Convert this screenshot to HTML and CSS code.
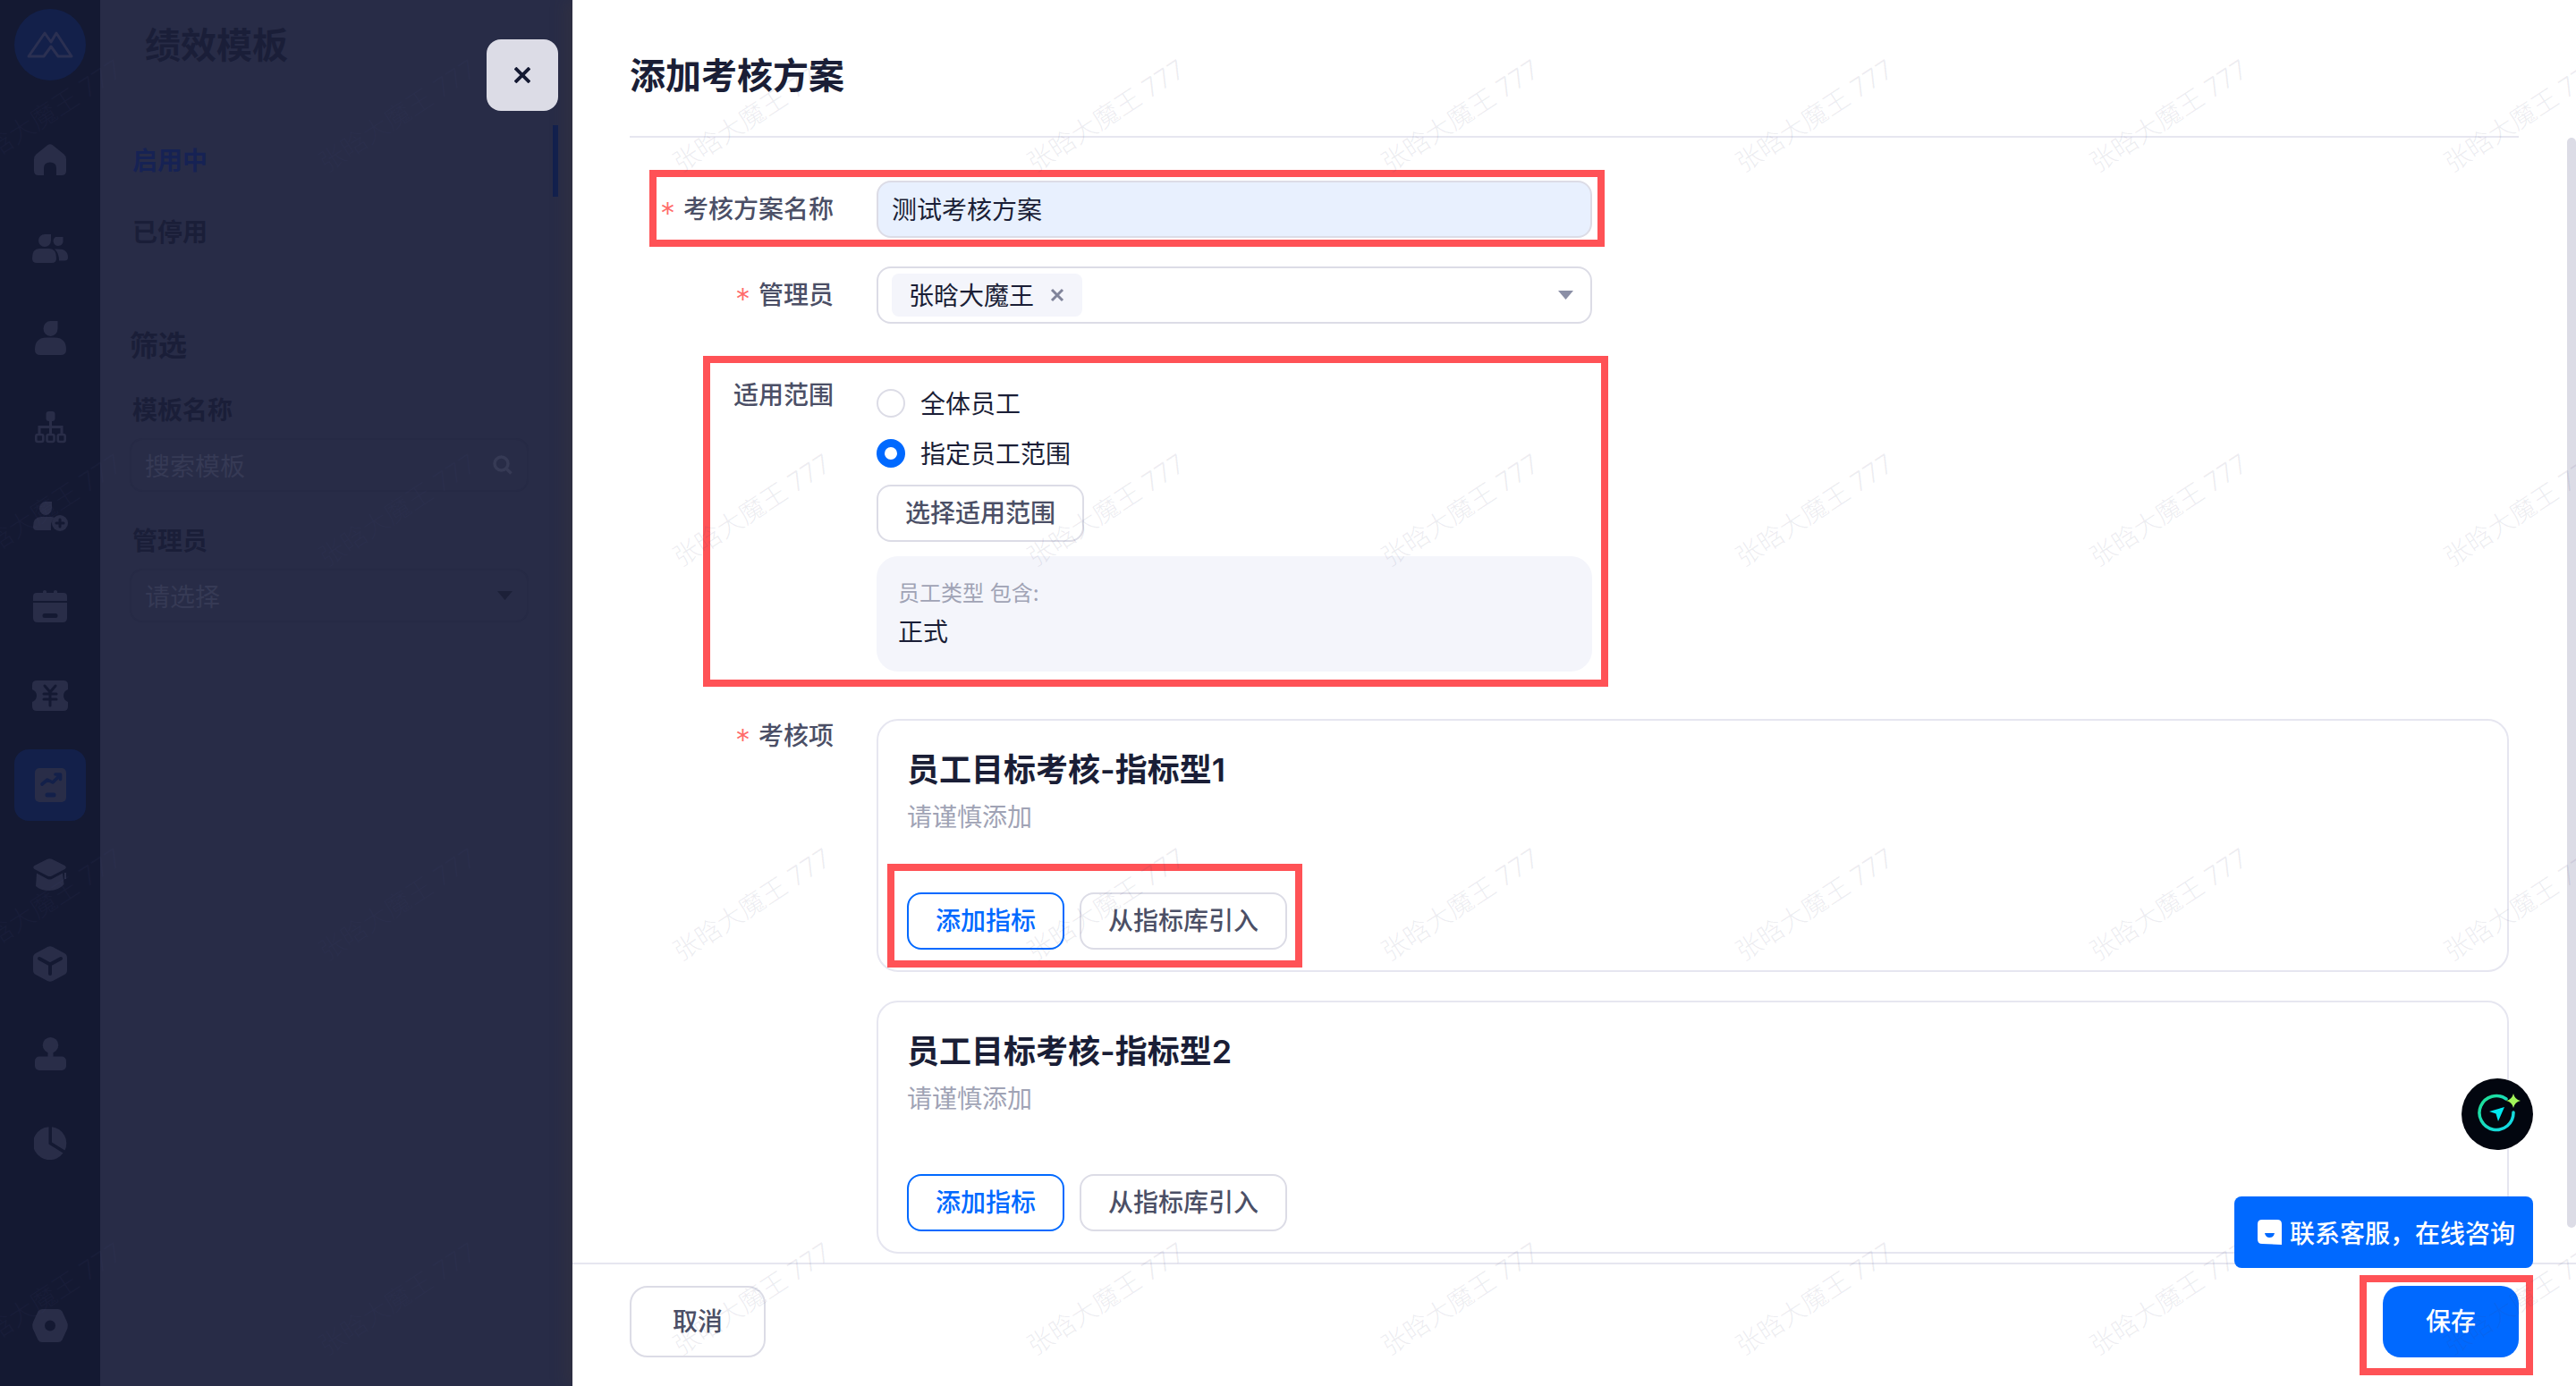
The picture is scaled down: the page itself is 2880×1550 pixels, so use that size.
FILE: index.html
```html
<!DOCTYPE html>
<html lang="zh-CN">
<head>
<meta charset="utf-8">
<title>添加考核方案</title>
<link rel="stylesheet" href="styles.css">
</head>
<body>
<div class="app">
  <aside class="sidebar">
    <div class="logo">
      <svg width="52" height="30" viewBox="0 0 52 30"><path class="logo-line" d="M2 28 L20 2 L27 12 L33 2 L50 28 H35 L27 17 L19 28 Z"/></svg>
    </div>
    <nav class="side-nav">
      <div class="side-item"><svg width="36" height="35" viewBox="0 0 36 35"><path class="ic" d="M15.5 1 Q18 -.6 20.5 1 L33.5 11.5 Q36 13.5 36 17 V30 Q36 35 31 35 H25 V27 Q25 20.5 18 20.5 Q11 20.5 11 27 V35 H5 Q0 35 0 30 V17 Q0 13.5 2.500 11.500 Z"/></svg></div>
      <div class="side-item"><svg width="40" height="32" viewBox="0 0 40 32"><path class="ic" d="M14 0 H21 V7 A7 7 0 1 1 14 0 Z M8 16 H19 Q27 16 27 27 Q27 32 22 32 H5 Q0 32 0 27 Q0 16 8 16 Z M26 3 H34.500 V8.500 A5.500 5.500 0 1 1 26 3 Z M25 16.500 H29 Q40 16.500 40 26 Q40 29.500 36 29.500 H30 Q30 21 25 16.500 Z"/></svg></div>
      <div class="side-item"><svg width="35" height="38" viewBox="0 0 35 38"><path class="ic" d="M17.500 0 H25.500 V8.500 A8 8.500 0 1 1 17.500 0 Z M13 18.500 H22 Q35 18.500 35 32 Q35 38 29 38 H6 Q0 38 0 32 Q0 18.500 13 18.500 Z"/></svg></div>
      <div class="side-item"><svg width="35" height="36" viewBox="0 0 35 36"><rect class="ic" x="12.500" y="0" width="10" height="11" rx="3"/><path class="ic-line" d="M17.500 10 V25 M5 25 V17.500 H30 V25"/><rect class="ic-line thin" x="1.300" y="26" width="8" height="8" rx="2"/><rect class="ic-line thin" x="13.500" y="26" width="8" height="8" rx="2"/><rect class="ic-line thin" x="25.700" y="26" width="8" height="8" rx="2"/></svg></div>
      <div class="side-item"><svg width="39" height="34" viewBox="0 0 39 34"><path class="ic" d="M14 0 H21 V7.500 A7 7.500 0 1 1 14 0 Z M9 17 H19 Q22 17 24 18 Q19 22 20 32 H4 Q0 32 0 28 Q0 17 9 17 Z"/><circle class="ic" cx="30" cy="24" r="9"/><path class="ic-cut" d="M30 20 V28 M26 24 H34"/></svg></div>
      <div class="side-item"><svg width="38" height="36" viewBox="0 0 38 36"><path class="ic" d="M0 12 V7 Q0 3 4 3 H11 V1.500 Q11 0 13 0 Q15 0 15 1.500 V3 H23 V1.500 Q23 0 25 0 Q27 0 27 1.500 V3 H34 Q38 3 38 7 V12 Z M0 14 H38 V31 Q38 36 33 36 H5 Q0 36 0 31 Z"/><rect class="ic-fill-cut" x="10.500" y="26" width="17" height="5" rx="2.500"/></svg></div>
      <div class="side-item"><svg width="40" height="34" viewBox="0 0 40 34"><path class="ic" d="M5 0 H35 Q40 0 40 5 V10 Q35 12 35 17 Q35 22 40 24 V29 Q40 34 35 34 H5 Q0 34 0 29 V24 Q5 22 5 17 Q5 12 0 10 V5 Q0 0 5 0 Z"/><path class="ic-cut" d="M14 6 L20 13 L26 6 M13 15 H27 M13 21 H27 M20 13 V28"/></svg></div>
      <div class="side-item is-active"><svg width="35" height="38" viewBox="0 0 35 38"><rect class="ic" width="35" height="38" rx="5"/><path class="ic-cut" d="M8 18 L14 13 L20 16 L28 8 M23 7 H28.500 V12.500"/><rect class="ic-fill-cut" x="11.500" y="27.500" width="12" height="5" rx="2.500"/></svg></div>
      <div class="side-item"><svg width="38" height="36" viewBox="0 0 38 36"><path class="ic" d="M16 .8 Q18.500 -.4 21 .8 L35.500 8 Q38 10 35.500 12 L21 19.500 Q18.500 20.700 16 19.500 L1.500 12 Q-1 10 1.500 8 Z M4 16.500 L16 23 Q18.500 24 21 23 L33 16.500 L34.500 29 Q28 36 18.500 36 Q8 36 3 31 Z"/><rect class="ic" x="35" y="16" width="2" height="7"/></svg></div>
      <div class="side-item"><svg width="38" height="40" viewBox="0 0 38 40"><path class="ic" d="M16 1 Q19 -.6 22 1 L35 8 Q38 9.500 38 13 V27 Q38 30.500 35 32 L22 39 Q19 40.600 16 39 L3 32 Q0 30.500 0 27 V13 Q0 9.500 3 8 Z"/><path class="ic-cut wide" d="M7 14 L19 20.500 L31 14 M19 20.500 V31"/></svg></div>
      <div class="side-item"><svg width="35" height="37" viewBox="0 0 35 37"><circle class="ic" cx="17.500" cy="8.800" r="8.800"/><rect class="ic" x="14.500" y="14" width="6" height="10"/><rect class="ic" x="0" y="21.500" width="35" height="15.500" rx="5"/></svg></div>
      <div class="side-item"><svg width="37" height="37" viewBox="0 0 37 37"><path class="ic" d="M16.500 .2 V19.500 L32.500 29.500 A18.500 18.500 0 1 1 16.500 .2 Z M20 .2 A18.500 18.500 0 0 1 34.500 26.500 L20 17.500 Z"/></svg></div>
    </nav>
    <div class="side-item side-bottom"><svg width="40" height="37" viewBox="0 0 40 37"><path class="ic evenodd" d="M11 0 H29 Q32 0 33.500 2.500 L39 14.500 Q40.500 18.500 39 22.500 L33.500 34.500 Q32 37 29 37 H11 Q8 37 6.500 34.500 L1 22.500 Q-.5 18.500 1 14.500 L6.500 2.500 Q8 0 11 0 Z M20 12.500 A6 6 0 1 0 20 24.500 A6 6 0 1 0 20 12.500 Z"/></svg></div>
  </aside>

  <section class="tpl-panel">
    <h1 class="tpl-title">绩效模板</h1>
    <ul class="tpl-nav">
      <li class="tpl-nav-item is-active">启用中</li>
      <li class="tpl-nav-item">已停用</li>
    </ul>
    <div class="filter">
      <h2 class="filter-title">筛选</h2>
      <div class="filter-label">模板名称</div>
      <div class="filter-field"><span>搜索模板</span>
        <svg width="22" height="22" viewBox="0 0 22 22"><circle class="dim-line" cx="9.500" cy="9.500" r="7.500"/><path class="dim-line" d="M15 15 L20.500 20.500"/></svg>
      </div>
      <div class="filter-label filter-label-2">管理员</div>
      <div class="filter-field"><span>请选择</span>
        <svg width="17" height="10" viewBox="0 0 17 10"><path class="dim-fill" d="M0 0 H17 L8.500 10 Z"/></svg>
      </div>
    </div>
  </section>

  <main class="drawer">
    <button class="drawer-close" type="button" aria-label="关闭">
      <svg width="18" height="18" viewBox="0 0 18 18"><path d="M1 1 L17 17 M17 1 L1 17"/></svg>
    </button>
    <header class="drawer-head"><h1>添加考核方案</h1></header>
    <div class="drawer-body">
      <div class="row row-name">
        <div class="mark mark-name"></div>
        <label class="row-label"><i>*</i>考核方案名称</label>
        <div class="field field-filled"><span class="field-text">测试考核方案</span></div>
      </div>
      <div class="row row-admin">
        <label class="row-label"><i>*</i>管理员</label>
        <div class="field field-select">
          <span class="tag"><span class="field-text">张晗大魔王</span><svg width="16" height="16" viewBox="0 0 16 16"><path d="M2 2 L14 14 M14 2 L2 14"/></svg></span>
          <svg class="caret" width="17" height="10" viewBox="0 0 17 10"><path d="M0 0 H17 L8.500 10 Z"/></svg>
        </div>
      </div>
      <div class="row row-scope">
        <div class="mark mark-scope"></div>
        <label class="row-label">适用范围</label>
        <div class="scope">
          <div class="radio"><span class="dot"></span><span class="field-text">全体员工</span></div>
          <div class="radio"><span class="dot dot-on"></span><span class="field-text">指定员工范围</span></div>
          <button class="btn btn-scope" type="button">选择适用范围</button>
          <div class="scope-box">
            <div class="scope-key">员工类型 包含:</div>
            <div class="scope-val">正式</div>
          </div>
        </div>
      </div>
      <div class="row row-items">
        <label class="row-label"><i>*</i>考核项</label>
        <div class="cards">
          <article class="card">
            <h3>员工目标考核-指标型1</h3>
            <p>请谨慎添加</p>
            <div class="card-actions">
              <div class="mark mark-actions"></div>
              <button class="btn btn-line" type="button">添加指标</button>
              <button class="btn" type="button">从指标库引入</button>
            </div>
          </article>
          <article class="card">
            <h3>员工目标考核-指标型2</h3>
            <p>请谨慎添加</p>
            <div class="card-actions">
              <button class="btn btn-line" type="button">添加指标</button>
              <button class="btn" type="button">从指标库引入</button>
            </div>
          </article>
        </div>
      </div>
      <div class="scroll-thumb"></div>
    </div>
    <footer class="drawer-foot">
      <button class="btn btn-foot" type="button">取消</button>
      <div class="save-wrap">
        <div class="mark mark-save"></div>
        <button class="btn btn-foot btn-primary" type="button">保存</button>
      </div>
    </footer>
    <div class="ai-bubble">
      <svg width="80" height="80" viewBox="0 0 80 80">
        <defs><linearGradient id="ring" x1="0" y1="0" x2="1" y2="1"><stop offset="0" stop-color="#1fe08f"/><stop offset="1" stop-color="#12d8f0"/></linearGradient></defs>
        <circle cx="40" cy="40" r="40" fill="#02060f"/>
        <path d="M50 23 A19 19 0 1 0 58 38" fill="none" stroke="url(#ring)" stroke-width="3.500" stroke-linecap="round"/>
        <path d="M58 17 Q59.500 23.500 66 25 Q59.500 26.500 58 33 Q56.500 26.500 50 25 Q56.500 23.500 58 17 Z" fill="#a2f55a"/>
        <path d="M31 37 L48 32 L41 48 L38.500 39.500 Z" fill="#00e8f0"/>
      </svg>
    </div>
    <button class="service" type="button">
      <svg width="29" height="28" viewBox="0 0 29 28"><path d="M6 0 H23 Q28 0 28 5 V28 L6 27 Q1 27 1 22 V5 Q1 0 6 0 Z" fill="#fff"/><path d="M9 15 H20 Q19 20 14.500 20 Q10 20 9 15 Z" fill="#0069ff"/></svg>
      联系客服，在线咨询
    </button>
  </main>
</div>

<div class="watermarks" aria-hidden="true">
  <div class="watermark-grid">
  <span>张晗大魔王 777</span><span>张晗大魔王 777</span><span>张晗大魔王 777</span><span>张晗大魔王 777</span><span>张晗大魔王 777</span><span>张晗大魔王 777</span><span>张晗大魔王 777</span><span>张晗大魔王 777</span>
  <span>张晗大魔王 777</span><span>张晗大魔王 777</span><span>张晗大魔王 777</span><span>张晗大魔王 777</span><span>张晗大魔王 777</span><span>张晗大魔王 777</span><span>张晗大魔王 777</span><span>张晗大魔王 777</span>
  <span>张晗大魔王 777</span><span>张晗大魔王 777</span><span>张晗大魔王 777</span><span>张晗大魔王 777</span><span>张晗大魔王 777</span><span>张晗大魔王 777</span><span>张晗大魔王 777</span><span>张晗大魔王 777</span>
  <span>张晗大魔王 777</span><span>张晗大魔王 777</span><span>张晗大魔王 777</span><span>张晗大魔王 777</span><span>张晗大魔王 777</span><span>张晗大魔王 777</span><span>张晗大魔王 777</span><span>张晗大魔王 777</span>
  </div>
</div>
</body>
</html>
```

FILE: styles.css
```css
* { box-sizing: border-box; }
html, body { margin: 0; padding: 0; }
body {
  position: relative;
  width: 2880px;
  height: 1550px;
  overflow: hidden;
  font-family: Inter, "Noto Sans CJK SC", sans-serif;
  font-size: 28px;
  color: #1a1e36;
  background: #fff;
}
h1, h2, h3, p, ul { margin: 0; padding: 0; list-style: none; }
button { font: inherit; }

.app { display: flex; height: 1550px; overflow: hidden; }

/* Sidebar */
.sidebar {
  flex: 0 0 112px;
  display: flex;
  flex-direction: column;
  align-items: center;
  padding: 10px 0 28px;
  background: #141932;
}
.logo {
  width: 80px;
  height: 80px;
  border-radius: 50%;
  background: #13204a;
  display: flex;
  align-items: center;
  justify-content: center;
  flex: none;
}
.logo-line { fill: none; stroke: #2b3052; stroke-width: 3; stroke-linejoin: round; }
.side-nav { display: flex; flex-direction: column; gap: 20px; margin-top: 48px; }
.side-item {
  width: 80px;
  height: 80px;
  display: flex;
  align-items: center;
  justify-content: center;
  border-radius: 16px;
}
.side-item.is-active { background: #13204a; }
.side-bottom { margin-top: auto; }
.ic { fill: #292d48; }
.ic.evenodd { fill-rule: evenodd; }
.ic-line { fill: none; stroke: #292d48; stroke-width: 3; }
.ic-line.thin { stroke-width: 2.600; }
.ic-cut { fill: none; stroke: #141932; stroke-width: 3; stroke-linecap: round; stroke-linejoin: round; }
.ic-cut.wide { stroke-width: 4; }
.ic-fill-cut { fill: #141932; }
.is-active .ic-cut { stroke: #13204a; stroke-width: 3.600; }
.is-active .ic-fill-cut { fill: #13204a; }

/* Template panel behind the mask */
.tpl-panel {
  flex: 0 0 528px;
  padding-right: 16px;
  background: #282c47;
  color: #1a1e38;
}
.tpl-title {
  height: 102px;
  padding-left: 50px;
  font-size: 40px;
  line-height: 102px;
  font-weight: 700;
  margin-bottom: 38px;
}
.tpl-nav-item {
  height: 80px;
  padding-left: 36px;
  line-height: 80px;
  font-weight: 700;
}
.tpl-nav-item.is-active {
  color: #162254;
  border-right: 6px solid #12204e;
}
.filter { margin-top: 65px; padding-left: 33px; }
.filter-title { font-size: 32px; line-height: 44px; font-weight: 700; }
.filter-label {
  margin-top: 30px;
  padding-left: 3px;
  line-height: 40px;
  font-weight: 700;
}
.filter-label-2 { margin-top: 35px; }
.filter-field {
  width: 446px;
  height: 60px;
  margin-top: 11px;
  padding: 0 16px 0 15px;
  display: flex;
  align-items: center;
  justify-content: space-between;
  border: 2px solid #262a45;
  border-radius: 14px;
  color: #363a55;
}
.dim-line { fill: none; stroke: #363a55; stroke-width: 3.500; }
.dim-fill { fill: #1c2038; }

/* Drawer */
.drawer {
  position: relative;
  flex: 0 0 2240px;
  display: flex;
  flex-direction: column;
  background: #fff;
  box-shadow: -8px 0 16px rgba(70, 60, 50, .25);
}
.drawer-close {
  position: absolute;
  top: 44px;
  right: 100%;
  margin-right: 16px;
  width: 80px;
  height: 80px;
  padding: 0;
  display: flex;
  align-items: center;
  justify-content: center;
  border: 0;
  border-radius: 16px;
  background: #dcdce6;
}
.drawer-close path { fill: none; stroke: #141932; stroke-width: 3.800; }
.drawer-head {
  flex: none;
  height: 154px;
  margin: 0 64px;
  padding-top: 57px;
  border-bottom: 2px solid #e6e6f0;
}
.drawer-head h1 { font-size: 40px; line-height: 56px; font-weight: 600; }

.drawer-body {
  position: relative;
  flex: 1;
  min-height: 0;
  padding: 48px 75px 0 64px;
  overflow: hidden;
}
.row {
  position: relative;
  display: grid;
  grid-template-columns: 228px 1fr;
  column-gap: 48px;
}
.row-admin { margin-top: 32px; }
.row-scope { margin-top: 48px; }
.row-items { margin-top: 40px; }
.row-label {
  height: 64px;
  text-align: right;
  line-height: 64px;
  color: #4b4f66;
  font-weight: 500;
}
.row-label i {
  margin-right: 9px;
  font-size: 34px;
  line-height: 0;
  font-style: normal;
  font-weight: 300;
  color: #ff6b6b;
  vertical-align: -.22em;
}
.field {
  width: 800px;
  height: 64px;
  padding: 0 15px;
  display: flex;
  align-items: center;
  border: 2px solid #dcdce6;
  border-radius: 16px;
  color: #1a1e36;
}
.field-text { margin-top: -3px; }
.field-filled { background: #e8f0fe; }
.field-select { justify-content: space-between; }
.tag {
  height: 48px;
  padding: 0 20px 0 19px;
  display: flex;
  align-items: center;
  gap: 18px;
  background: #f4f5fb;
  border-radius: 8px;
}
.tag path { fill: none; stroke: #80849a; stroke-width: 3; }
.caret { margin-right: 4px; }
.caret path { fill: #8b8fa6; }

.scope { padding-top: 13px; }
.radio {
  height: 56px;
  display: flex;
  align-items: center;
  gap: 17px;
}
.dot {
  width: 32px;
  height: 32px;
  border: 2px solid #dcdce6;
  border-radius: 50%;
  background: #fff;
}
.dot-on { border: 9px solid #0069ff; }
.btn {
  height: 64px;
  padding: 0 30px;
  border: 2px solid #dcdce6;
  border-radius: 16px;
  background: transparent;
  color: #4b4f66;
  font-weight: 500;
  line-height: 1;
}
.btn-scope { display: block; margin-top: 7px; }
.scope-box {
  width: 800px;
  height: 129px;
  margin-top: 16px;
  padding: 26px 24px 0;
  background: #f4f5fb;
  border-radius: 24px;
}
.scope-key { font-size: 24px; line-height: 32px; color: #a0a3b5; }
.scope-val { margin-top: 7px; line-height: 40px; color: #1a1e36; }

.cards { display: flex; flex-direction: column; gap: 32px; padding-top: 13px; }
.card {
  height: 283px;
  padding: 30px 32px 0;
  border: 2px solid #e6e6f0;
  border-radius: 24px;
}
.card h3 { font-size: 36px; line-height: 50px; font-weight: 600; }
.card p { margin-top: 8px; line-height: 40px; color: #a0a3b5; }
.card-actions { position: relative; display: flex; gap: 17px; margin-top: 64px; }
.btn-line { border-color: #0069ff; color: #0069ff; }
.scroll-thumb {
  position: absolute;
  top: 0;
  right: 0;
  width: 10px;
  height: 1219px;
  border-radius: 5px;
  background: #dcdce6;
}

.drawer-foot {
  flex: none;
  height: 138px;
  padding: 24px 64px 0;
  display: flex;
  justify-content: space-between;
  align-items: flex-start;
  border-top: 2px solid #e6e6f0;
}
.btn-foot { width: 152px; height: 80px; padding: 0; border-radius: 20px; }
.btn-primary { border: 0; background: #0069ff; color: #fff; }
.save-wrap { position: relative; }

/* Red annotation frames */
.mark {
  position: absolute;
  z-index: 3;
  border: 8px solid #ff5256;
  pointer-events: none;
}
.mark-name { left: 22px; top: -12px; width: 1068px; height: 86px; }
.mark-scope { left: 82px; top: -12px; width: 1012px; height: 370px; }
.mark-actions { left: -22px; top: -32px; width: 464px; height: 116px; }
.mark-save { left: -26px; top: -12px; width: 194px; height: 112px; }

/* Floating widgets */
.ai-bubble {
  position: absolute;
  z-index: 6;
  top: 1206px;
  right: 48px;
  width: 80px;
  height: 80px;
}
.service {
  position: absolute;
  z-index: 6;
  top: 1338px;
  right: 48px;
  width: 334px;
  height: 80px;
  padding: 0 0 0 25px;
  display: flex;
  align-items: center;
  gap: 8px;
  border: 0;
  border-radius: 8px;
  background: #0069ff;
  color: #fff;
  font-weight: 500;
  white-space: nowrap;
}

/* Watermark */
.watermarks {
  position: absolute;
  z-index: 5;
  inset: 0;
  overflow: hidden;
  pointer-events: none;
}
.watermark-grid {
  display: grid;
  grid-template-columns: repeat(8, 396px);
  grid-auto-rows: 441px;
  place-items: center;
  margin: -91px 0 0 -150px;
}
.watermarks span {
  transform: rotate(-33deg);
  font-size: 29px;
  line-height: 1;
  font-weight: 300;
  color: rgba(70, 70, 115, .1);
  white-space: nowrap;
}
```
